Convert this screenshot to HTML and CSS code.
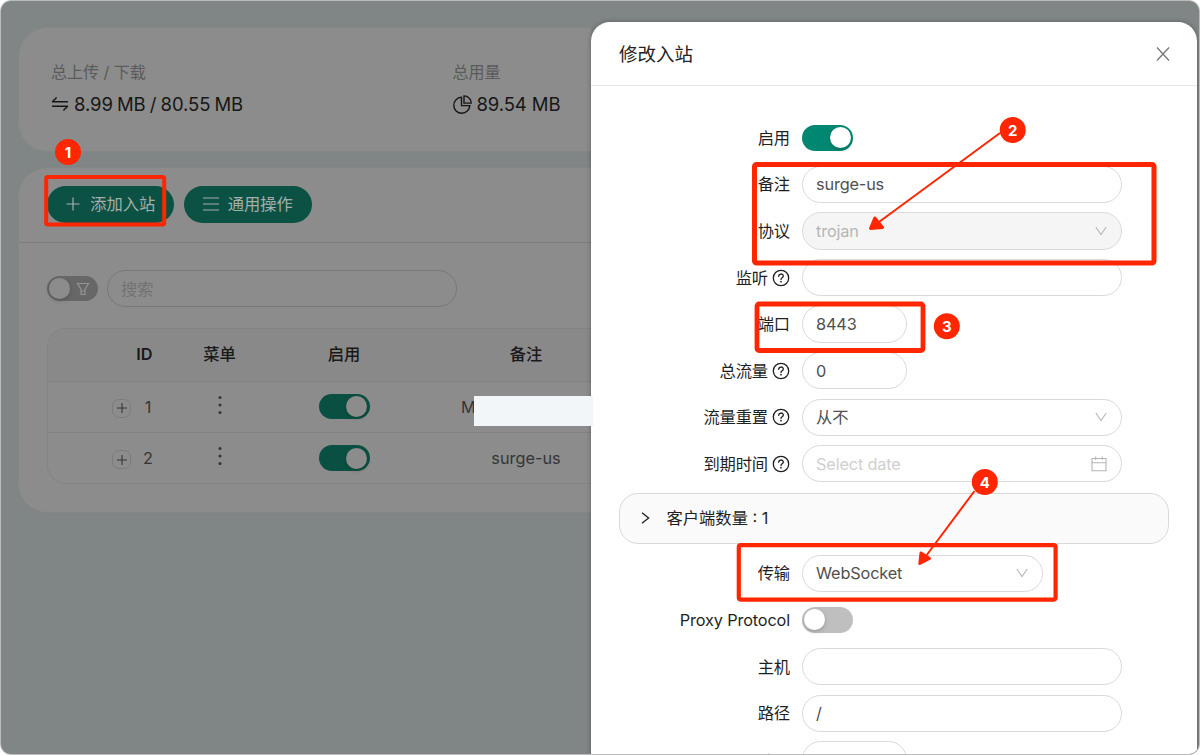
FILE: index.html
```
<!DOCTYPE html>
<html lang="zh-CN">
<head>
<meta charset="utf-8">
<title>修改入站</title>
<link rel="stylesheet" href="styles.css">
</head>
<body>
<svg class="defs" width="0" height="0">
  <symbol id="help" viewBox="0 0 18 18"><g fill="none" stroke="currentColor" stroke-width="1.3" stroke-linecap="round"><circle cx="9" cy="9" r="7.7"/><path d="M6.7 7.3C6.7 4.3 11.3 4.3 11.3 7.1C11.3 8.8 9 8.7 9 10.4"/></g><circle cx="9" cy="12.7" r=".85" fill="currentColor"/></symbol>
  <symbol id="down" viewBox="0 0 12 10"><path d="M.8 1L6 8.6L11.2 1" fill="none" stroke="currentColor" stroke-width="1.1"/></symbol>
</svg>
<div class="window">
  <main class="page">
    <section class="card stats">
      <div class="stat">
        <div class="stat-title">总上传 / 下载</div>
        <div class="stat-value">
          <svg width="18" height="18" viewBox="0 0 18 18"><path d="M1 6.8H17M1.6 6.6L5.6 2.4M17 11.2H1M16.4 11.4L12.4 15.6" fill="none" stroke="currentColor" stroke-width="1.4"/></svg>
          <span class="traffic">8.99 MB / 80.55 MB</span>
        </div>
      </div>
      <div class="stat">
        <div class="stat-title">总用量</div>
        <div class="stat-value">
          <svg width="19" height="19" viewBox="0 0 19 19"><path d="M8.5 2.3A8 8 0 1 0 16.8 10.6H8.5ZM11 .9V8.1H18.2A7.3 7.3 0 0 0 11 .9Z" fill="none" stroke="currentColor" stroke-width="1.4"/></svg>
          <span>89.54 MB</span>
        </div>
      </div>
    </section>
    <section class="card inbounds">
      <div class="toolbar">
        <button class="btn"><svg width="16" height="16" viewBox="0 0 16 16"><path d="M8 1.5V14.5M1.5 8H14.5" stroke="currentColor" stroke-width="1.2"/></svg><span>添加入站</span></button>
        <button class="btn"><svg width="16" height="16" viewBox="0 0 16 16"><path d="M0 2H16M0 8H16M0 14H16" stroke="currentColor" stroke-width="1.2"/></svg><span>通用操作</span></button>
      </div>
      <div class="filter">
        <span class="switch off dim"><svg class="funnel" width="14" height="14" viewBox="0 0 14 14"><path d="M1.5 1.5H12.5L9 7.2V12.3H5V7.2ZM5 9H9" fill="none" stroke="currentColor" stroke-width="1.2"/></svg></span>
        <div class="search">搜索</div>
      </div>
      <div class="table">
        <div class="tr th"><div class="id">ID</div><div>菜单</div><div>启用</div><div>备注</div></div>
        <div class="tr">
          <div class="id"><i class="expand"><svg width="12" height="12" viewBox="0 0 12 12"><path d="M6 1V11M1 6H11" stroke="currentColor" stroke-width="1.1"/></svg></i><span class="num">1</span></div>
          <div><svg class="dots" width="4" height="20" viewBox="0 0 4 20"><g fill="currentColor"><circle cx="2" cy="2.6" r="1.5"/><circle cx="2" cy="10" r="1.5"/><circle cx="2" cy="17.4" r="1.5"/></g></svg></div>
          <div><span class="switch on dim"></span></div>
          <div class="masked">M<i class="mask"></i></div>
        </div>
        <div class="tr">
          <div class="id"><i class="expand"><svg width="12" height="12" viewBox="0 0 12 12"><path d="M6 1V11M1 6H11" stroke="currentColor" stroke-width="1.1"/></svg></i><span class="num">2</span></div>
          <div><svg class="dots" width="4" height="20" viewBox="0 0 4 20"><g fill="currentColor"><circle cx="2" cy="2.6" r="1.5"/><circle cx="2" cy="10" r="1.5"/><circle cx="2" cy="17.4" r="1.5"/></g></svg></div>
          <div><span class="switch on dim"></span></div>
          <div>surge-us</div>
        </div>
      </div>
    </section>
  </main>

  <aside class="drawer">
    <header class="drawer-head">
      <h1>修改入站</h1>
      <svg width="14" height="16" viewBox="0 0 14 16"><path d="M1 1.5L13 14.5M13 1.5L1 14.5" stroke="currentColor" stroke-width="1.3"/></svg>
    </header>
    <div class="form">
      <div class="row"><label>启用</label><span class="switch on"></span></div>
      <div class="row"><label>备注</label><div class="input">surge-us</div></div>
      <div class="row"><label>协议</label><div class="input disabled">trojan<svg class="caret" width="12" height="10"><use href="#down"/></svg></div></div>
      <div class="row"><label>监听<svg width="18" height="18"><use href="#help"/></svg></label><div class="input"></div></div>
      <div class="row"><label>端口</label><div class="input small">8443</div></div>
      <div class="row"><label>总流量<svg width="18" height="18"><use href="#help"/></svg></label><div class="input small">0</div></div>
      <div class="row"><label>流量重置<svg width="18" height="18"><use href="#help"/></svg></label><div class="input">从不<svg class="caret" width="12" height="10"><use href="#down"/></svg></div></div>
      <div class="row"><label>到期时间<svg width="18" height="18"><use href="#help"/></svg></label><div class="input empty">Select date<svg class="calendar" width="16" height="16" viewBox="0 0 16 16"><path d="M1 2.5H15V14.7H1ZM1 6.7H15M4.7 .5V4M11.3 .5V4" fill="none" stroke="currentColor" stroke-width="1.1"/></svg></div></div>
      <div class="collapse"><svg width="9" height="12" viewBox="0 0 9 12"><path d="M1 .8L7.6 6L1 11.2" fill="none" stroke="currentColor" stroke-width="1.3"/></svg><span>客户端数量 : 1</span></div>
      <div class="row"><label>传输</label><div class="input medium">WebSocket<svg class="caret" width="12" height="10"><use href="#down"/></svg></div></div>
      <div class="row"><label>Proxy Protocol</label><span class="switch off"></span></div>
      <div class="row"><label>主机</label><div class="input"></div></div>
      <div class="row"><label>路径</label><div class="input">/</div></div>
      <div class="row"><label>Heartbeat Period</label><div class="input small">0</div></div>
    </div>
  </aside>
</div>

<svg class="marks" width="1200" height="755" viewBox="0 0 1200 755">
  <g class="frames">
    <rect x="46.2" y="177" width="118" height="47.5" rx="1.5" stroke-width="4"/>
    <rect x="754.5" y="164.5" width="399.5" height="98.5" rx="2" stroke-width="5"/>
    <rect x="757" y="304" width="166" height="46.5" rx="2" stroke-width="4.8"/>
    <rect x="738.8" y="545.2" width="316.8" height="54.4" rx="2" stroke-width="4.2"/>
  </g>
  <g class="arrows"><path d="M1000 133L879 222"/><path d="M974.5 491L926 556"/></g>
  <g class="heads"><path d="M870.5 228.5L874.8 218L882.5 227.5Z"/><path d="M919.8 563.5L921 553L929.5 558.5Z"/></g>
  <g class="badges"><circle cx="68" cy="152" r="13"/><circle cx="1012.7" cy="130" r="13"/><circle cx="946.8" cy="326.2" r="13"/><circle cx="984.8" cy="482" r="13"/></g>
  <g class="numbers"><text x="68" y="157.5">1</text><text x="1012.7" y="135.5">2</text><text x="946.8" y="331.7">3</text><text x="984.8" y="487.5">4</text></g>
</svg>
</body>
</html>
```
FILE: styles.css
```
* { box-sizing: border-box; }
body {
  margin: 0;
  width: 1200px;
  height: 755px;
  overflow: hidden;
  background: #fff;
  font: 16.3px/24px Inter, "Noto Sans CJK SC", sans-serif;
  color: #1f1f1f;
}
.defs { position: absolute; }
.window {
  display: flex;
  justify-content: space-between;
  width: 1200px;
  height: 755px;
  border: 1px solid #bcbcbc;
  border-radius: 11px;
  background: #808585;
  overflow: hidden;
}
.page { width: 590px; padding: 26px 0 0 17px; flex: none; }
.card {
  background: #8c8c8c;
  border: 1px solid #858686;
  border-right: 0;
  border-radius: 29px 0 0 29px;
}
.stats { display: flex; height: 125px; padding: 32px 0 0 32px; overflow: hidden; }
.stat { width: 401.5px; flex: none; }
.stat-title { color: #5a5a5a; font-size: 16px; }
.stat-value {
  display: flex;
  align-items: center;
  gap: 5px;
  margin-top: 6px;
  height: 28px;
  font-size: 18.5px;
  letter-spacing: -.1px;
  color: #171717;
  white-space: nowrap;
}
.traffic { word-spacing: -.9px; }
.inbounds { margin-top: 15px; height: 346px; }
.toolbar {
  display: flex;
  gap: 10px;
  height: 75px;
  padding: 18px 0 0 27.5px;
  border-bottom: 1px solid #7d7d7d;
}
.btn {
  display: flex;
  align-items: center;
  justify-content: center;
  gap: 9px;
  width: 127.5px;
  height: 37px;
  padding: 0 0 1px;
  border: 0;
  border-radius: 19px;
  background: #0c5244;
  color: #a5aeac;
  font: inherit;
}
.filter { display: flex; align-items: center; gap: 9px; padding: 27px 0 0 28px; }
.search {
  width: 349.5px;
  height: 37px;
  padding: 6px 13px;
  border: 1px solid #777;
  border-radius: 19px;
  color: #727272;
}
.switch {
  display: inline-flex;
  align-items: center;
  flex: none;
  width: 51px;
  height: 25.6px;
  padding: 2.3px;
  border-radius: 13px;
}
.switch::before {
  content: "";
  width: 21px;
  height: 21px;
  border-radius: 50%;
  background: #fff;
  box-shadow: 0 2px 4px rgba(0, 35, 11, .2);
}
.switch.on { background: #008771; justify-content: flex-end; }
.switch.off { background: #bfbfbf; }
.switch.dim::before { background: #8c8c8c; }
.switch.on.dim { background: #0a5042; }
.switch.off.dim { background: #676767; }
.funnel { margin-left: 6px; color: #929292; }
.table {
  margin: 21px 0 0 28px;
  height: 156px;
  border: 1px solid #838383;
  border-right: 0;
  border-radius: 19px 0 0 19px;
  color: #353535;
}
.tr {
  display: grid;
  grid-template-columns: 134px 75px 174px 190px;
  height: 51.4px;
  border-top: 1px solid #828282;
}
.tr > div { display: flex; align-items: center; justify-content: center; }
.tr > .id { justify-content: flex-end; padding-right: 28px; gap: 11px; }
.num { width: 12px; text-align: center; }
.th {
  height: 51.5px;
  border-top: 0;
  border-radius: 18px 0 0 0;
  background: #898989;
  color: #191919;
  font-weight: 450;
  padding-bottom: 1px;
}
.tr.th > .id { padding-right: 29.5px; font-weight: 600; }
.expand {
  display: flex;
  align-items: center;
  justify-content: center;
  width: 19px;
  height: 19px;
  margin-top: 3px;
  border: 1px solid #7c7c7c;
  border-radius: 7px;
}
.dots { margin-top: -4px; }
.tr > .masked { justify-content: flex-start; padding-left: 30px; position: relative; }
.mask {
  position: absolute;
  left: 43px;
  top: 14.5px;
  width: 119px;
  height: 30px;
  background: #f3f6f8;
}
.drawer {
  width: 606px;
  height: 740px;
  flex: none;
  margin: 21px 2px 0 0;
  border-radius: 19px 19px 0 0;
  background: #fff;
  box-shadow: 0 0 5px rgba(0, 0, 0, .3);
}
.drawer-head {
  display: flex;
  align-items: center;
  justify-content: space-between;
  height: 64px;
  padding: 0 27px 0 28px;
  border-bottom: 1px solid #e8e8e8;
  color: #777;
}
.drawer-head h1 { margin: 0; font-size: 18.5px; font-weight: 400; color: #222; }
.form { padding: 28.5px 28.5px 0 27.5px; letter-spacing: -.15px; }
.row { display: flex; align-items: center; gap: 12px; height: 46.58px; }
.row label {
  display: flex;
  align-items: center;
  justify-content: flex-end;
  gap: 4px;
  width: 171.5px;
  flex: none;
  white-space: nowrap;
}
.input {
  display: flex;
  align-items: center;
  justify-content: space-between;
  width: 320px;
  height: 37.3px;
  padding: 0 14px 0 13px;
  border: 1px solid #d9d9d9;
  border-radius: 19px;
  color: #505050;
}
.disabled { background: #f5f5f5; color: #b5b5b5; }
.empty { color: #cfcfcf; }
.small { width: 105px; }
.medium { width: 240.5px; }
.caret, .calendar { color: #b5b5b5; }
.collapse {
  display: flex;
  align-items: center;
  gap: 17px;
  height: 51.5px;
  margin: 5.5px 0 6px;
  padding-left: 21px;
  border: 1px solid #d9d9d9;
  border-radius: 19px;
  background: #fafafa;
  letter-spacing: 0;
}
.marks { position: absolute; left: 0; top: 0; }
.frames { fill: none; stroke: #ff2600; stroke-linejoin: round; }
.arrows { fill: none; stroke: #ff2600; stroke-width: 2; }
.heads { fill: #ff2600; stroke: #ff2600; stroke-width: 3; stroke-linejoin: round; }
.badges { fill: #ff2600; }
.numbers { fill: #fff; font: 700 15px Inter, sans-serif; text-anchor: middle; }
```
